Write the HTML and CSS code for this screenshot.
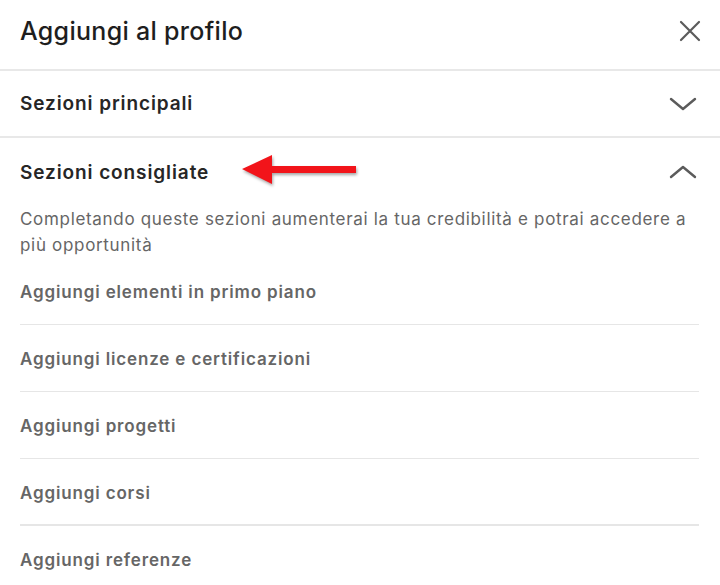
FILE: index.html
```html
<!DOCTYPE html>
<html lang="it">
<head>
    <meta charset="UTF-8">
    <meta name="viewport" content="width=device-width, initial-scale=1.0">
    <title>Aggiungi al profilo</title>
    <link rel="stylesheet" href="styles.css">
</head>
<body>
    <div id="modal">
        <div class="modal-header">
            <h2>Aggiungi al profilo</h2>
            <button class="icon-btn" aria-label="Chiudi">
                <svg width="22" height="22" viewBox="0 0 22 22"><path d="M2 2 L20 20 M20 2 L2 20" stroke="#5b5b5b" stroke-width="2.2" fill="none" stroke-linecap="round"/></svg>
            </button>
        </div>
        <div class="section">
            <div class="section-head">
                <h3>Sezioni principali</h3>
                <svg class="chevron" width="30" height="16" viewBox="0 0 30 16"><path d="M3 3 L15 13 L27 3" stroke="#5b5b5b" stroke-width="2.4" fill="none" stroke-linecap="round" stroke-linejoin="round"/></svg>
            </div>
        </div>
        <div class="section open">
            <div class="section-head">
                <h3>Sezioni consigliate</h3>
                <svg class="pointer" width="124" height="40" viewBox="0 0 124 40">
                    <path d="M4 17 L34 3 L34 14 L118 14 L118 21 L34 21 L34 32 Z" fill="#f2141a" filter="drop-shadow(1px 2px 1.5px rgba(0,0,0,0.35))"/>
                </svg>
                <svg class="chevron" width="30" height="16" viewBox="0 0 30 16"><path d="M3 13 L15 3 L27 13" stroke="#5b5b5b" stroke-width="2.4" fill="none" stroke-linecap="round" stroke-linejoin="round"/></svg>
            </div>
            <p class="desc">Completando queste sezioni aumenterai la tua credibilità e potrai accedere a più opportunità</p>
            <ul class="items">
                <li>Aggiungi elementi in primo piano</li>
                <li>Aggiungi licenze e certificazioni</li>
                <li>Aggiungi progetti</li>
                <li>Aggiungi corsi</li>
                <li>Aggiungi referenze</li>
            </ul>
        </div>
    </div>
</body>
</html>
```

FILE: styles.css
```css
body {
    margin: 0;
    background: #fff;
    font-family: Inter, "Noto Sans", Arial, sans-serif;
    color: #1f1f1f;
}
#modal {
    width: 720px;
    height: 585px;
    overflow: hidden;
}
.modal-header {
    height: 71px;
    box-sizing: border-box;
    display: flex;
    align-items: center;
    justify-content: space-between;
    padding: 0 19px 8px 20px;
    border-bottom: 2px solid #e8e8e8;
}
.modal-header h2 {
    margin: 0;
    font-size: 25px;
    font-weight: 500;
    letter-spacing: 0.3px;
    color: #1e1e1e;
}
.icon-btn {
    border: 0;
    background: none;
    padding: 0;
    display: flex;
}
.section { border-bottom: 2px solid #e8e8e8; }
.section.open { border-bottom: 0; }
.section-head {
    position: relative;
    height: 65px;
    display: flex;
    align-items: center;
    justify-content: space-between;
    padding: 0 22px 0 20px;
}
.section.open .section-head { height: 68px; }
.section-head h3 {
    margin: 0;
    font-size: 19px;
    font-weight: 600;
    letter-spacing: 0.9px;
    color: #262626;
}
.pointer {
    position: absolute;
    left: 238px;
    top: 14px;
}
.desc {
    margin: 0;
    padding: 0 20px;
    font-size: 17px;
    line-height: 26px;
    letter-spacing: 0.68px;
    color: #666;
}
.items {
    list-style: none;
    margin: 0 21px 0 20px;
    padding: 0;
}
.items li {
    box-sizing: border-box;
    height: 67px;
    padding-top: 22px;
    line-height: 24px;
    border-bottom: 1px solid #e6e6e6;
    font-size: 17px;
    font-weight: 600;
    letter-spacing: 0.85px;
    color: #666;
}
.items li:nth-child(4) { border-bottom-width: 2px; }
```
